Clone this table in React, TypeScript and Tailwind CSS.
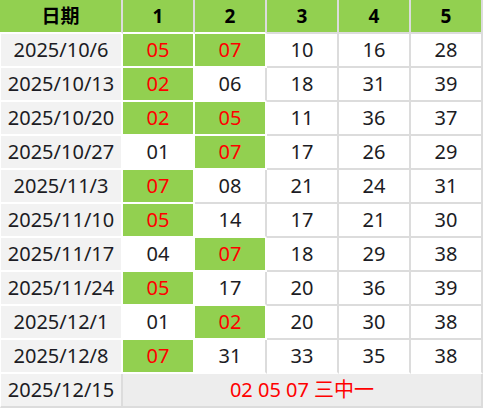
import React from "react";

type Row = { date: string; nums: string[]; hits: number[] };

const rows: Row[] = [
  { date: "2025/10/6", nums: ["05", "07", "10", "16", "28"], hits: [0, 1] },
  { date: "2025/10/13", nums: ["02", "06", "18", "31", "39"], hits: [0] },
  { date: "2025/10/20", nums: ["02", "05", "11", "36", "37"], hits: [0, 1] },
  { date: "2025/10/27", nums: ["01", "07", "17", "26", "29"], hits: [1] },
  { date: "2025/11/3", nums: ["07", "08", "21", "24", "31"], hits: [0] },
  { date: "2025/11/10", nums: ["05", "14", "17", "21", "30"], hits: [0] },
  { date: "2025/11/17", nums: ["04", "07", "18", "29", "38"], hits: [1] },
  { date: "2025/11/24", nums: ["05", "17", "20", "36", "39"], hits: [0] },
  { date: "2025/12/1", nums: ["01", "02", "20", "30", "38"], hits: [1] },
  { date: "2025/12/8", nums: ["07", "31", "33", "35", "38"], hits: [0] },
];

const font = { fontFamily: '"Noto Sans", "Noto Sans CJK SC", sans-serif' };

// is cell at (row r, col c) "light" (green or date column)? c=0 is date column
function light(r: number, c: number): boolean {
  if (r < 0 || r >= rows.length) return false;
  if (c === 0) return true;
  return rows[r].hits.includes(c - 1);
}

export default function App() {
  const headers = ["日期", "1", "2", "3", "4", "5"];
  return (
    <div className="w-[483px] h-[408px] bg-white" style={font}>
      <div className="grid grid-cols-[123px_72px_72px_72px_72px_72px] auto-rows-[34px]">
        {headers.map((h, c) => {
          const below = light(0, c);
          return (
            <div
              key={"h" + c}
              className={
                "flex items-center justify-center bg-[#92d050] font-bold text-[19px] text-black border-r-2 border-b-2 border-r-[#dcdcdc] " +
                (below ? "border-b-white" : "border-b-[#dcdcdc]")
              }
            >
              {h}
            </div>
          );
        })}
        {rows.map((row, r) => (
          <React.Fragment key={row.date}>
            <div className="flex items-center justify-center bg-[#f2f2f2] text-[20px] text-[#1c1c24] border-l border-l-white border-r-2 border-b-2 border-r-white border-b-white">
              {row.date}
            </div>
            {row.nums.map((n, i) => {
              const c = i + 1;
              const hit = light(r, c);
              const rightWhite = c < 5 && (hit || light(r, c + 1));
              const bottomWhite = r === rows.length - 1 || hit || light(r + 1, c);
              return (
                <div
                  key={r + "-" + c}
                  className={
                    "flex items-center justify-center text-[20px] border-r-2 border-b-2 " +
                    (hit ? "bg-[#92d050] text-[#ff0000] " : "bg-white text-[#1c1c24] ") +
                    (rightWhite ? "border-r-white " : "border-r-[#dcdcdc] ") +
                    (bottomWhite ? "border-b-white" : "border-b-[#dcdcdc]")
                  }
                >
                  {n}
                </div>
              );
            })}
          </React.Fragment>
        ))}
        <div className="flex items-center justify-center bg-[#f2f2f2] text-[20px] text-[#1c1c24] border-l border-l-white border-r-2 border-b-2 border-r-[#dcdcdc] border-b-[#dcdcdc]">
          2025/12/15
        </div>
        <div className="col-span-5 flex items-center justify-center bg-[#ededed] text-[20px] text-[#ff0000] border-r-2 border-b-2 border-r-[#dcdcdc] border-b-[#dcdcdc]">
          02 05 07 三中一
        </div>
      </div>
    </div>
  );
}
